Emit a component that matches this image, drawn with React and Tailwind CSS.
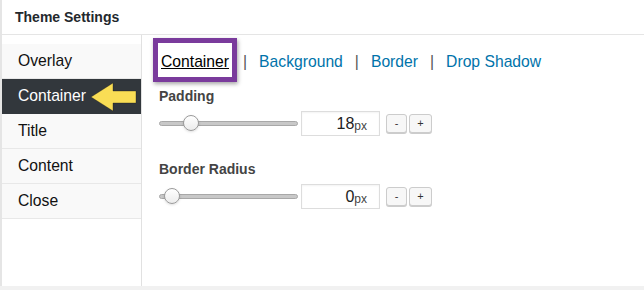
import React from 'react';

const font = "font-['Helvetica_Neue','Liberation_Sans',Arial,sans-serif]";

const Slider = ({ pos, value }) => (
  <div className="flex items-center h-[26px]">
    <div className="relative w-[139px] h-[18px] flex items-center">
      <div className="w-full h-[5px] rounded-full bg-[#c8c8c8] border border-[#a8a8a8]" />
      <div
        className="absolute top-[1px] w-[16px] h-[16px] rounded-full bg-gradient-to-b from-white to-[#ececec] border border-[#9a9a9a] shadow-sm"
        style={{ left: pos }}
      />
    </div>
    <div className="ml-[3px] w-[79px] h-[25px] border border-[#dddddd] bg-white flex items-end justify-end pr-[12px] pb-[3px] shadow-[inset_0_1px_2px_rgba(0,0,0,0.05)]">
      <span className="text-[16px] leading-none text-[#222]">{value}</span>
      <span className="text-[12px] leading-none text-[#444]">px</span>
    </div>
    <div className="ml-[6px] flex gap-[2px]">
      <button className="w-[21px] h-[19px] rounded-[3px] border border-[#cccccc] bg-[#f7f7f7] text-[11px] leading-none text-[#333] shadow-[0_1px_0_#ccc] flex items-center justify-center">-</button>
      <button className="w-[23px] h-[19px] rounded-[3px] border border-[#cccccc] bg-[#f7f7f7] text-[11px] leading-none text-[#333] shadow-[0_1px_0_#ccc] flex items-center justify-center">+</button>
    </div>
  </div>
);

const items = ['Overlay', 'Container', 'Title', 'Content', 'Close'];

export default function App() {
  return (
    <div className={`w-[644px] h-[290px] bg-[#f1f1f1] ${font}`}>
      <div className="h-[286px] bg-white border-l-2 border-[#e5e5e5] flex flex-col">
        <div className="h-[35px] border-b border-[#e5e5e5] flex items-center pl-[13px]">
          <span className="text-[14px] font-bold text-[#23282d]">Theme Settings</span>
        </div>
        <div className="flex flex-1">
          <div className="w-[140px] border-r border-[#e1e1e1] pt-[9px]">
            {items.map((it) => (
              <div
                key={it}
                className={`relative h-[35px] flex items-center pl-[16px] text-[15.7px] border-b ${
                  it === 'Container'
                    ? 'bg-[#32373c] text-white border-[#32373c]'
                    : 'bg-[#f9f9f9] text-[#111] border-[#e8e8e8]'
                }`}
              >
                {it}
                {it === 'Container' && (
                  <svg className="absolute left-[87px] top-[2px]" width="50" height="32" viewBox="0 0 50 32">
                    <path
                      d="M2 16 L24 2 L24 10 L47 10 L47 22 L24 22 L24 30 Z"
                      fill="#f9dd55"
                      stroke="#1a1a1a"
                      strokeOpacity="0.35"
                      strokeWidth="1"
                      strokeLinejoin="round"
                    />
                  </svg>
                )}
              </div>
            ))}
          </div>
          <div className="flex-1 pl-[17px] pt-[2px]">
            <div className="flex items-center h-[45px] text-[15.7px] pt-[4px]">
              <div className="border-[5px] border-[#7a3b9c] h-[44px] px-[3px] flex items-center shadow-[1px_2px_4px_rgba(0,0,0,0.35)] -ml-[6px] -mt-[3px]">
                <span className="underline text-black pt-[3px]">Container</span>
              </div>
              <span className="ml-[6px] mr-[12px] text-[#555]">|</span>
              <span className="text-[#0073aa]">Background</span>
              <span className="mx-[12px] text-[#555]">|</span>
              <span className="text-[#0073aa]">Border</span>
              <span className="mx-[12px] text-[#555]">|</span>
              <span className="text-[#0073aa]">Drop Shadow</span>
            </div>
            <div className="mt-[4px] text-[14px] font-bold text-[#444]">Padding</div>
            <div className="mt-[3px]">
              <Slider pos="24px" value="18" />
            </div>
            <div className="mt-[23px] text-[14px] font-bold text-[#444]">Border Radius</div>
            <div className="mt-[3px]">
              <Slider pos="5px" value="0" />
            </div>
          </div>
        </div>
      </div>
    </div>
  );
}
